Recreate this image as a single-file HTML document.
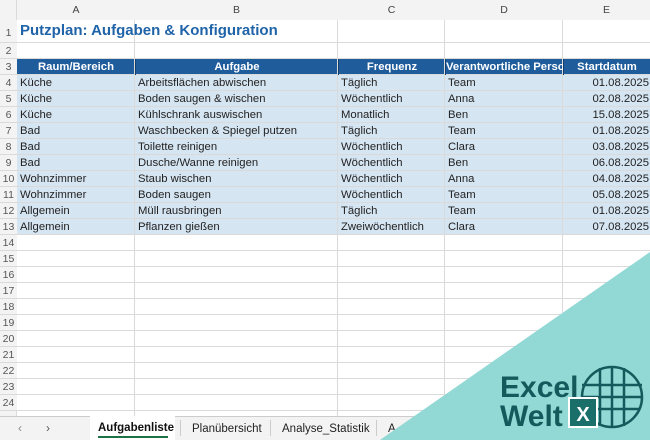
<!DOCTYPE html><html><head><meta charset="utf-8"><style>
*{margin:0;padding:0;box-sizing:border-box}
body{width:650px;height:440px;overflow:hidden;background:#fff;font-family:"Liberation Sans",sans-serif;font-size:11.3px;color:#222;position:relative}
.a{position:absolute;white-space:nowrap}
.vl{position:absolute;top:0;width:1px;background:#dadada;height:416px}
.hl{position:absolute;left:0;width:650px;height:1px;background:#dadada}
.rh{position:absolute;left:0;width:17px;text-align:center;color:#555;font-size:10.5px;background:#f3f3f3}
.ch{position:absolute;top:0;height:20px;line-height:20px;text-align:center;color:#444;font-size:10.5px;background:#f3f3f3}
</style></head><body>
<div class="a" style="left:0;top:0;width:650px;height:20px;background:#f3f3f3;border-bottom:1px solid #ccc"></div>
<div class="a" style="left:0;top:0;width:17px;height:416px;background:#f3f3f3;border-right:1px solid #ccc"></div>
<div class="a" style="left:17px;top:59px;width:633px;height:16px;background:#1f5c9c"></div>
<div class="a" style="left:17px;top:75px;width:633px;height:160px;background:#d6e5f2"></div>
<div id="g"></div>
<div class="ch" style="left:17px;width:118px">A</div>
<div class="ch" style="left:135px;width:203px">B</div>
<div class="ch" style="left:338px;width:107px">C</div>
<div class="ch" style="left:445px;width:118px">D</div>
<div class="ch" style="left:563px;width:87px">E</div>
<div class="a" style="left:20px;top:22px;font-size:15px;font-weight:bold;color:#1f63a8">Putzplan: Aufgaben &amp; Konfiguration</div>
<div id="t"></div>
<div class="a" style="left:0;top:416px;width:650px;height:24px;background:#f3f3f3;border-top:1px solid #ccc"></div>
<div class="a" style="left:18px;top:421px;color:#888;font-size:12px">‹</div>
<div class="a" style="left:46px;top:421px;color:#555;font-size:12px">›</div>
<div class="a" style="left:90px;top:416px;width:85px;height:24px;background:#fff"></div>
<div class="a" style="left:98px;top:422px;font-weight:bold;font-size:11.5px;color:#111">Aufgabenliste</div>
<div class="a" style="left:98px;top:436px;width:70px;height:2px;background:#1e7145"></div>
<div class="a" style="left:180px;top:420px;width:1px;height:16px;background:#ccc"></div>
<div class="a" style="left:192px;top:423px;font-size:11.5px">Planübersicht</div>
<div class="a" style="left:270px;top:420px;width:1px;height:16px;background:#ccc"></div>
<div class="a" style="left:282px;top:423px;font-size:11.5px">Analyse_Statistik</div>
<div class="a" style="left:376px;top:420px;width:1px;height:16px;background:#ccc"></div>
<div class="a" style="left:388px;top:423px;font-size:11.5px">A</div>
<svg class="a" style="left:0;top:0" width="650" height="440">
<polygon points="650,252 650,440 380,440" fill="#92d8d5"/>
<text x="500" y="397" font-family="Liberation Sans" font-weight="bold" font-size="30" fill="#145a5c">Excel</text>
<text x="500" y="426" font-family="Liberation Sans" font-weight="bold" font-size="30" fill="#145a5c">Welt</text>
<g fill="none" stroke="#145a5c" stroke-width="2.5">
<circle cx="612" cy="397" r="30"/>
<line x1="582" y1="385" x2="642" y2="385"/><line x1="582" y1="397" x2="642" y2="397"/><line x1="584" y1="409" x2="640" y2="409"/>
<line x1="600" y1="368" x2="600" y2="426"/><line x1="612" y1="367" x2="612" y2="427"/><line x1="624" y1="368" x2="624" y2="426"/>
</g>
<rect x="568" y="397" width="30" height="31" fill="#fff"/>
<rect x="570" y="399" width="26" height="27" fill="#1a6f6b"/>
<text x="583" y="421" text-anchor="middle" font-family="Liberation Sans" font-weight="bold" font-size="20" fill="#fff">X</text>
</svg>
<script>
(function(){
var g='',rows=[20,43];for(var i=0;i<22;i++)rows.push(59+i*16);
var xs=[17,135,338,445,563];
xs.forEach(function(x){g+='<div class="vl" style="left:'+(x-1)+'px"></div>'});
for(var i=0;i<24;i++){var ty=rows[i],h=(i==0?23:16);g+='<div class="hl" style="top:'+(ty+h-1)+'px"></div>';
g+='<div class="rh" style="top:'+ty+'px;height:'+(h-1)+'px;line-height:'+(h+(i==0?4:0))+'px">'+(i+1)+'</div>';}
document.getElementById('g').innerHTML=g;
var d=[["Küche","Arbeitsflächen abwischen","Täglich","Team","01.08.2025"],["Küche","Boden saugen & wischen","Wöchentlich","Anna","02.08.2025"],["Küche","Kühlschrank auswischen","Monatlich","Ben","15.08.2025"],["Bad","Waschbecken & Spiegel putzen","Täglich","Team","01.08.2025"],["Bad","Toilette reinigen","Wöchentlich","Clara","03.08.2025"],["Bad","Dusche/Wanne reinigen","Wöchentlich","Ben","06.08.2025"],["Wohnzimmer","Staub wischen","Wöchentlich","Anna","04.08.2025"],["Wohnzimmer","Boden saugen","Wöchentlich","Team","05.08.2025"],["Allgemein","Müll rausbringen","Täglich","Team","01.08.2025"],["Allgemein","Pflanzen gießen","Zweiwöchentlich","Clara","07.08.2025"]];
var t='',H=["Raum/Bereich","Aufgabe","Frequenz","Verantwortliche Person","Startdatum"],W=[118,203,107,118,87];
H.forEach(function(s,j){t+='<div class="a" style="left:'+xs[j]+'px;top:59px;width:'+W[j]+'px;height:16px;line-height:16px;text-align:center;color:#fff;font-weight:bold;overflow:hidden;'+(j?'border-left:1px solid #123f6e;':'')+'">'+s+'</div>'});
d.forEach(function(r,i){r.forEach(function(s,j){var y=75+i*16;
if(j==4)t+='<div class="a" style="left:563px;width:86px;text-align:right;top:'+y+'px;line-height:16px">'+s+'</div>';
else t+='<div class="a" style="left:'+(xs[j]+3)+'px;top:'+y+'px;line-height:16px">'+s.replace('&','&amp;')+'</div>';})});
document.getElementById('t').innerHTML=t;
})();
</script>
</body></html>
